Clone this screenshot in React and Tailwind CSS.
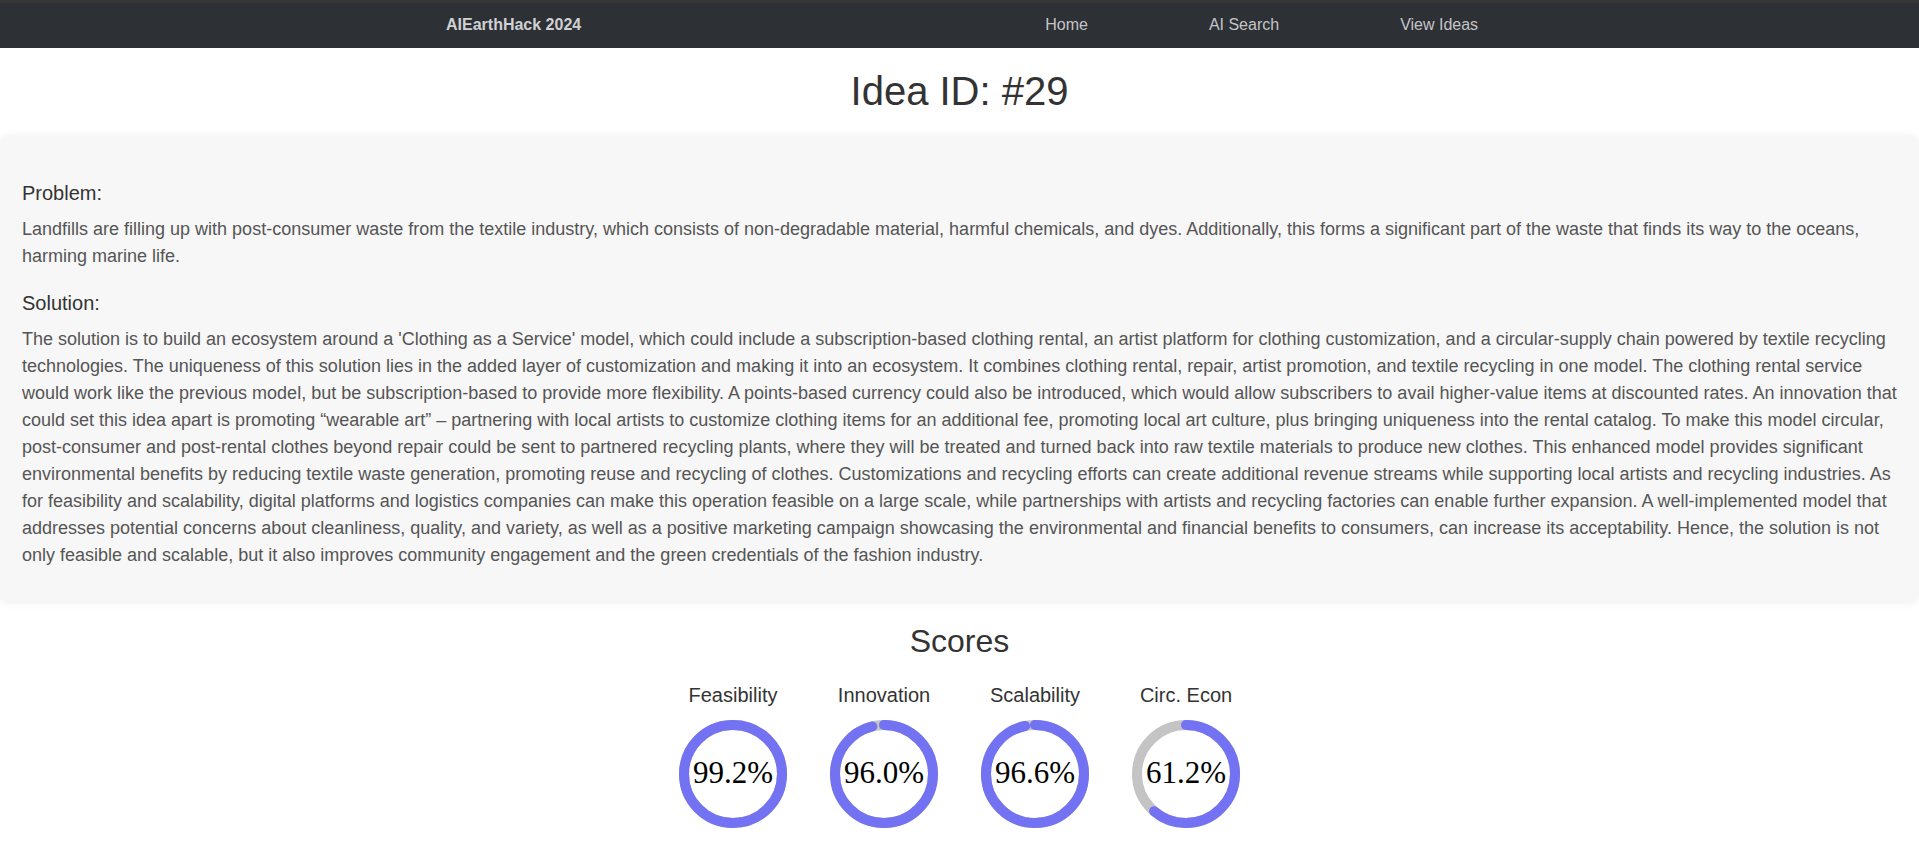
const scores = [
  { label: "Feasibility", value: 99.2 },
  { label: "Innovation", value: 96.0 },
  { label: "Scalability", value: 96.6 },
  { label: "Circ. Econ", value: 61.2 },
];

const problem =
  "Landfills are filling up with post-consumer waste from the textile industry, which consists of non-degradable material, harmful chemicals, and dyes. Additionally, this forms a significant part of the waste that finds its way to the oceans, harming marine life.";

const solution =
  "The solution is to build an ecosystem around a 'Clothing as a Service' model, which could include a subscription-based clothing rental, an artist platform for clothing customization, and a circular-supply chain powered by textile recycling technologies. The uniqueness of this solution lies in the added layer of customization and making it into an ecosystem. It combines clothing rental, repair, artist promotion, and textile recycling in one model. The clothing rental service would work like the previous model, but be subscription-based to provide more flexibility. A points-based currency could also be introduced, which would allow subscribers to avail higher-value items at discounted rates. An innovation that could set this idea apart is promoting \u201cwearable art\u201d \u2013 partnering with local artists to customize clothing items for an additional fee, promoting local art culture, plus bringing uniqueness into the rental catalog. To make this model circular, post-consumer and post-rental clothes beyond repair could be sent to partnered recycling plants, where they will be treated and turned back into raw textile materials to produce new clothes. This enhanced model provides significant environmental benefits by reducing textile waste generation, promoting reuse and recycling of clothes. Customizations and recycling efforts can create additional revenue streams while supporting local artists and recycling industries. As for feasibility and scalability, digital platforms and logistics companies can make this operation feasible on a large scale, while partnerships with artists and recycling factories can enable further expansion. A well-implemented model that addresses potential concerns about cleanliness, quality, and variety, as well as a positive marketing campaign showcasing the environmental and financial benefits to consumers, can increase its acceptability. Hence, the solution is not only feasible and scalable, but it also improves community engagement and the green credentials of the fashion industry.";

const ScoreRing = ({ value }) => {
  const r = 49;
  const c = 2 * Math.PI * r;
  return (
    <svg width="108" height="108" viewBox="0 0 108 108">
      <circle cx="54" cy="54" r={r} fill="none" stroke="#c4c4c4" strokeWidth="10" />
      <circle
        cx="54"
        cy="54"
        r={r}
        fill="none"
        stroke="#7272f2"
        strokeWidth="10"
        strokeLinecap="round"
        strokeDasharray={`${(c * value) / 100} ${c}`}
        transform="rotate(-90 54 54)"
      />
      <text
        x="54"
        y="52"
        textAnchor="middle"
        dominantBaseline="central"
        fill="#000"
        fontSize="31"
        fontFamily="'Liberation Serif', 'Times New Roman', serif"
      >
        {value.toFixed(1)}%
      </text>
    </svg>
  );
};

const App = () => {
  return (
    <div className="min-h-[868px] bg-white font-['Liberation_Sans',Arial,sans-serif]">
      {/* Navbar */}
      <nav className="h-[48px] border-t-[3px] border-[#373737] bg-[#2d3035] flex items-center pb-[2px]">
        <span className="ml-[446px] text-[16px] font-bold text-[#d0d1d2]">
          AIEarthHack 2024
        </span>
        <div className="ml-[464px] flex gap-[121px] text-[16px] text-[#c4c5c7]">
          <a>Home</a>
          <a>AI Search</a>
          <a>View Ideas</a>
        </div>
      </nav>

      <h1 className="mt-[19px] text-center text-[40px] leading-[48px] text-[#333]">
        Idea ID: #29
      </h1>

      {/* Idea card */}
      <div className="mt-[22px] rounded-[8px] bg-[#f7f7f7] shadow-[0_0_10px_rgba(0,0,0,0.08)] pl-[22px] pr-[20px] pt-[44px] pb-[33px]">
        <h5 className="text-[20px] leading-[24px] text-[#333] mb-[11px]">Problem:</h5>
        <p className="text-[18px] leading-[27px] text-[#555] mb-[21px]">{problem}</p>
        <h5 className="text-[20px] leading-[24px] text-[#333] mb-[11px]">Solution:</h5>
        <p className="text-[18px] leading-[27px] text-[#555]">{solution}</p>
      </div>

      {/* Scores */}
      <div className="mt-[20px] flex flex-col items-center">
        <h2 className="text-[32px] leading-[38px] text-[#333]">Scores</h2>
        <div className="mt-[23px] flex">
          {scores.map((s) => (
            <div key={s.label} className="w-[151px] flex flex-col items-center">
              <span className="text-[20px] leading-[24px] text-[#333]">{s.label}</span>
              <div className="mt-[13px]">
                <ScoreRing value={s.value} />
              </div>
            </div>
          ))}
        </div>
      </div>
    </div>
  );
};

export default App;
